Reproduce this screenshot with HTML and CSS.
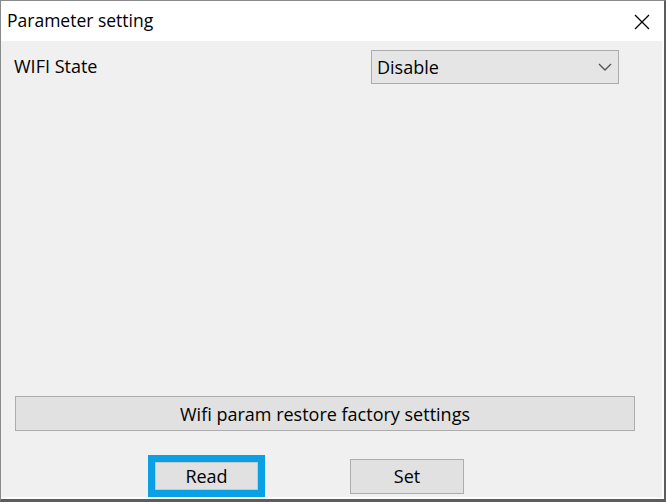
FILE: index.html
```html
<!DOCTYPE html>
<html lang="en">
<head>
    <meta charset="UTF-8">
    <title>Parameter setting</title>
    <link rel="stylesheet" href="styles.css">
</head>
<body>
    <div class="window">
        <div class="titlebar">
            <span class="title">Parameter setting</span>
            <span class="close">
                <svg width="16" height="16" viewBox="0 0 16 16">
                    <path d="M1 1 L15 15 M15 1 L1 15" stroke="#000" stroke-width="1.3" fill="none"/>
                </svg>
            </span>
        </div>
        <div class="content">
            <div class="field-row">
                <label class="field-label">WIFI State</label>
                <div class="combo">
                    <span>Disable</span>
                    <svg width="14" height="8" viewBox="0 0 14 8">
                        <path d="M1 1 L7 7 L13 1" stroke="#555" stroke-width="1.4" fill="none"/>
                    </svg>
                </div>
            </div>
            <button class="btn btn-wide">Wifi param restore factory settings</button>
            <div class="actions">
                <button class="btn btn-focus">Read</button>
                <button class="btn btn-set">Set</button>
            </div>
        </div>
    </div>
</body>
</html>
```

FILE: styles.css
```css
* {
    box-sizing: border-box;
}
body {
    margin: 0;
    padding: 0;
    font-family: "Open Sans", "Noto Sans", sans-serif;
    font-size: 18px;
    color: #000;
    background-color: #f0f0f0;
}
.window {
    width: 666px;
    height: 502px;
    border-left: 1px solid #8a8a8a;
    border-top: 1px solid #8a8a8a;
    border-right: 2px solid #5c5c5c;
    border-bottom: 3px solid #5c5c5c;
    display: flex;
    flex-direction: column;
}
.titlebar {
    height: 40px;
    background-color: #fff;
    display: flex;
    align-items: center;
    justify-content: space-between;
    padding: 0 14px 0 6px;
}
.title {
    font-size: 17.5px;
    padding-bottom: 2px;
}
.close {
    display: flex;
    padding-top: 2px;
}
.content {
    flex: 1;
    background-color: #f0f0f0;
    border-right: 2px solid #fbfbfb;
    border-bottom: 2px solid #fbfbfb;
    display: flex;
    flex-direction: column;
    padding: 9px 0 0 0;
}
.field-row {
    display: grid;
    grid-template-columns: 357px 248px;
    padding-left: 13px;
}
.field-label {
    padding-top: 4px;
}
.combo {
    height: 34px;
    background-color: #e5e5e5;
    border: 1px solid #acacac;
    display: flex;
    align-items: center;
    justify-content: space-between;
    padding: 0 6px 0 5px;
}
.btn {
    font-family: inherit;
    font-size: 18px;
    color: #000;
    background-color: #e1e1e1;
    border: 1px solid #adadad;
    border-radius: 0;
    padding: 0;
}
.btn-wide {
    margin: auto 0 0 14px;
    width: 620px;
    height: 35px;
}
.actions {
    display: flex;
    align-items: center;
    gap: 85px;
    padding-left: 147px;
    margin-top: 24px;
}
.btn-focus {
    width: 117px;
    height: 42px;
    border: 7px solid #0aa0e6;
    box-shadow: inset 0 0 0 1px #c8c8c8;
}
.btn-set {
    width: 114px;
    height: 35px;
}
```
